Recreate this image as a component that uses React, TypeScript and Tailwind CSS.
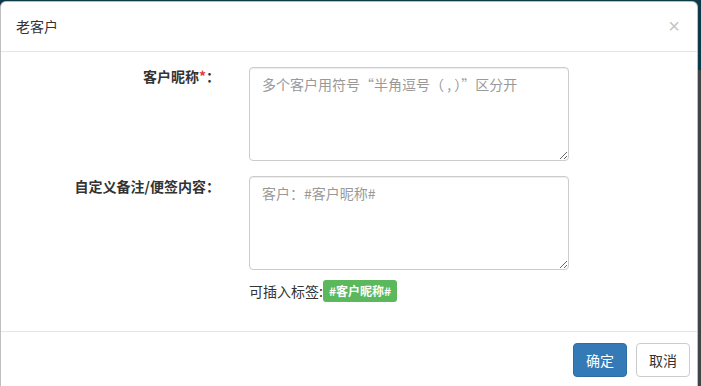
import React from "react";

const cjk = { fontFamily: '"Noto Sans CJK SC", "Liberation Sans", sans-serif' };

export default function App() {
  return (
    <div
      className="w-[701px] h-[386px] overflow-hidden bg-[linear-gradient(#0b3a48_0,#0b3a48_70px,#3f4446_70px)] pt-px"
      style={cjk}
    >
      <div className="w-[698px] bg-white border border-[rgba(0,0,0,0.25)] rounded-t-[6px] text-[#333] text-[14px]">
        {/* Header */}
        <div className="h-[50px] border-b border-[#e5e5e5] flex items-center justify-between pl-[15px] pr-[17px]">
          <h4 className="text-[14px] leading-[20px] mt-[-1px]">老客户</h4>
          <button
            className="text-[20px] leading-none text-[#c4c4c4] mt-[-1px]"
            style={{ fontFamily: '"Liberation Sans", sans-serif' }}
          >
            ×
          </button>
        </div>

        {/* Body */}
        <div className="pt-[15px] pb-[29px]">
          <div className="flex">
            <label className="w-[219px] text-right font-bold leading-[20px] mt-[-1px]">
              客户昵称<span className="text-[#e4393c]">*</span>：
            </label>
            <textarea
              className="ml-[29px] w-[320px] h-[94px] border border-[#ccc] rounded-[4px] px-[12px] py-[6px] text-[14px] leading-[20px] placeholder:text-[#999] shadow-[inset_0_1px_1px_rgba(0,0,0,0.075)] outline-none"
              placeholder="多个客户用符号“半角逗号（ , ）”区分开"
            />
          </div>

          <div className="flex mt-[15px]">
            <label className="w-[219px] text-right font-bold leading-[20px]">
              自定义备注/便签内容：
            </label>
            <div className="ml-[29px] flex flex-col">
              <textarea
                className="w-[320px] h-[94px] border border-[#ccc] rounded-[4px] px-[12px] py-[6px] text-[14px] leading-[20px] placeholder:text-[#999] shadow-[inset_0_1px_1px_rgba(0,0,0,0.075)] outline-none"
                placeholder="客户：#客户昵称#"
              />
              <div className="flex items-center mt-[10px]">
                <span className="leading-[20px]">可插入标签:</span>
                <span className="h-[22px] flex items-center px-[6px] rounded-[3px] bg-[#5cb85c] text-white text-[12px] font-bold">
                  #客户昵称#
                </span>
              </div>
            </div>
          </div>
        </div>

        {/* Footer */}
        <div className="border-t border-[#e5e5e5] pt-[11px] pb-[15px] pr-[7px] flex justify-end gap-[9px]">
          <button className="h-[34px] px-[12px] rounded-[4px] bg-[#337ab7] border border-[#2e6da4] text-white text-[14px]">
            确定
          </button>
          <button className="h-[34px] px-[12px] rounded-[4px] bg-white border border-[#ccc] text-[#333] text-[14px]">
            取消
          </button>
        </div>
      </div>
    </div>
  );
}
